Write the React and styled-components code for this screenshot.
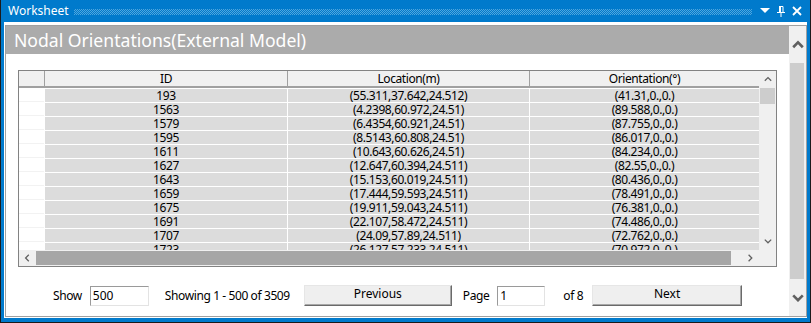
import React from "react";
import styled, { createGlobalStyle } from "styled-components";

const rows = [
  ["193", "(55.311,37.642,24.512)", "(41.31,0.,0.)"],
  ["1563", "(4.2398,60.972,24.51)", "(89.588,0.,0.)"],
  ["1579", "(6.4354,60.921,24.51)", "(87.755,0.,0.)"],
  ["1595", "(8.5143,60.808,24.51)", "(86.017,0.,0.)"],
  ["1611", "(10.643,60.626,24.51)", "(84.234,0.,0.)"],
  ["1627", "(12.647,60.394,24.511)", "(82.55,0.,0.)"],
  ["1643", "(15.153,60.019,24.511)", "(80.436,0.,0.)"],
  ["1659", "(17.444,59.593,24.511)", "(78.491,0.,0.)"],
  ["1675", "(19.911,59.043,24.511)", "(76.381,0.,0.)"],
  ["1691", "(22.107,58.472,24.511)", "(74.486,0.,0.)"],
  ["1707", "(24.09,57.89,24.511)", "(72.762,0.,0.)"],
  ["1723", "(26.127,57.233,24.511)", "(70.972,0.,0.)"],
];

// small chevron used by the scroll bars
function Chevron({dir = "up", size = 8, weight = 1.6}) {
  const paths = {
    up: "M1 6 L5 2 L9 6",
    down: "M1 2 L5 6 L9 2",
    left: "M6 1 L2 5 L6 9",
    right: "M2 1 L6 5 L2 9",
  };
  const horizontal = dir === "up" || dir === "down";
  return (
    <svg
      width={horizontal ? size : size * 0.8}
      height={horizontal ? size * 0.8 : size}
      viewBox={horizontal ? "0 0 10 8" : "0 0 8 10"}
    >
      <path d={paths[dir]} fill="none" stroke="#606060" strokeWidth={weight} />
    </svg>
  );
}

export default function App() {
  return (
    <>
      <GlobalStyle />
      <Window>
        <TitleBar>
          <TitleText>Worksheet</TitleText>
          <Dots />
          <TitleIcons>
            <svg width="10" height="6" viewBox="0 0 10 6">
              <path d="M0 0 H10 L5 5 Z" fill="#fff" />
            </svg>
            <svg width="8" height="11" viewBox="0 0 8 11">
              <path d="M2 0.5 H6 V6 M2.5 0.5 V6 M3.5 0.5 V6" fill="none" stroke="#fff" strokeWidth="1" />
              <path d="M0 6.5 H8 M4 6.5 V11" fill="none" stroke="#fff" strokeWidth="1" />
            </svg>
            <svg width="10" height="10" viewBox="0 0 10 10">
              <path d="M1 1 L9 9 M9 1 L1 9" fill="none" stroke="#fff" strokeWidth="1.8" />
            </svg>
          </TitleIcons>
        </TitleBar>
        <Body>
          <Panel>
            <Frame>
              <Content>
                <HeaderBar>Nodal Orientations(External Model)</HeaderBar>
                <GridBox>
                  <GridTop>
                    <Table>
                      <HeadRow>
                        <HeadCell />
                        <HeadCell>ID</HeadCell>
                        <HeadCell>Location(m)</HeadCell>
                        <HeadCell $last>Orientation(°)</HeadCell>
                      </HeadRow>
                      {rows.map((r) => (
                        <Row key={r[0]}>
                          <RowHead />
                          <Cell>{r[0]}</Cell>
                          <Cell>{r[1]}</Cell>
                          <Cell $last>{r[2]}</Cell>
                        </Row>
                      ))}
                    </Table>
                    <VScroll>
                      <ArrowBox $h={17}><Chevron dir="up" /></ArrowBox>
                      <VTrack>
                        <VThumb />
                      </VTrack>
                      <ArrowBox $h={17}><Chevron dir="down" /></ArrowBox>
                    </VScroll>
                  </GridTop>
                  <HScroll>
                    <ArrowBox $w={17}><Chevron dir="left" /></ArrowBox>
                    <HTrack>
                      <HThumb />
                    </HTrack>
                    <ArrowBox $w={17}><Chevron dir="right" /></ArrowBox>
                    <Corner />
                  </HScroll>
                </GridBox>
                <Pager>
                  <Label>Show</Label>
                  <Field $w={59} $gap={8} defaultValue="500" />
                  <Label $gap={16}>Showing 1 - 500 of 3509</Label>
                  <Button $w={148} $gap={14}>Previous</Button>
                  <Label $gap={11}>Page</Label>
                  <Field $w={48} $gap={8} defaultValue="1" />
                  <Label $gap={18}>of 8</Label>
                  <Button $w={150} $gap={9}>Next</Button>
                </Pager>
              </Content>
              <OuterScroll>
                <ArrowBox $h={37}><Chevron dir="up" size={12} weight={2.2} /></ArrowBox>
                <VTrack>
                  <OuterThumb />
                </VTrack>
                <ArrowBox $h={37}><Chevron dir="down" size={12} weight={2.2} /></ArrowBox>
              </OuterScroll>
            </Frame>
          </Panel>
        </Body>
      </Window>
    </>
  );
}

const GlobalStyle = createGlobalStyle`
  html, body {
    margin: 0;
    padding: 0;
    overflow: hidden;
    background: #fff;
  }
  body {
    font-family: "Noto Sans", "Open Sans", sans-serif;
  }
`;

const Window = styled.div`
  width: 811px;
  height: 323px;
  box-sizing: border-box;
  display: flex;
  flex-direction: column;
  background: #007acc;
  border: 1px solid #1b1b1b;
  border-top: none;
`;

const TitleBar = styled.div`
  height: 22px;
  flex: none;
  display: flex;
  align-items: center;
  padding: 0 8px 0 7px;
  color: #fff;
`;

const TitleText = styled.span`
  font-size: 12px;
  line-height: 22px;
`;

const Dots = styled.div`
  flex: 1;
  height: 6px;
  margin: 1px 8px 0 5px;
  background-image: repeating-conic-gradient(#4fa6de 0 25%, transparent 0 50%);
  background-size: 2px 2px;
`;

const TitleIcons = styled.div`
  display: flex;
  align-items: center;
  gap: 7px;
  svg {
    display: block;
  }
`;

const Body = styled.div`
  flex: 1;
  display: flex;
  padding: 0 3px 4px 3px;
  min-height: 0;
`;

const Panel = styled.div`
  flex: 1;
  display: flex;
  background: #fff;
  padding: 3px 0 1px 1px;
`;

const Frame = styled.div`
  flex: 1;
  display: flex;
  border: 1px solid #a0a0a0;
  min-width: 0;
`;

const Content = styled.div`
  flex: 1;
  display: flex;
  flex-direction: column;
  min-width: 0;
`;

const HeaderBar = styled.div`
  height: 28px;
  background: #ababab;
  color: #fff;
  font-size: 17.6px;
  line-height: 28px;
  padding-left: 8px;
  white-space: nowrap;
`;

const GridBox = styled.div`
  margin: 16px 0 0 12px;
  width: 759px;
  height: 197px;
  box-sizing: border-box;
  border: 1px solid #828282;
  display: flex;
  flex-direction: column;
  font-size: 12px;
  letter-spacing: -0.4px;
  color: #000;
`;

const GridTop = styled.div`
  height: 179px;
  display: flex;
  overflow: hidden;
`;

const Table = styled.div`
  flex: 1;
  overflow: hidden;
`;

const cols = "26px 243px 242px 1fr";

const HeadRow = styled.div`
  display: grid;
  grid-template-columns: ${cols};
  height: 17px;
  box-sizing: border-box;
  background: #f0f0f0;
  border-bottom: 2px solid #a0a0a0;
`;

const HeadCell = styled.div`
  text-align: center;
  line-height: 15px;
  border-right: ${(p) => (p.$last ? "none" : "1px solid #a0a0a0")};
  white-space: nowrap;
`;

const Row = styled.div`
  display: grid;
  grid-template-columns: ${cols};
  height: 14px;
  box-sizing: border-box;
  border-top: 1px solid #fff;
`;

const RowHead = styled.div`
  background: #fff;
  border-right: 1px solid #fff;
  box-shadow: inset 0 -1px #f2f2f2;
`;

const Cell = styled.div`
  background: #dcdcdc;
  text-align: center;
  line-height: 13px;
  white-space: nowrap;
  border-right: ${(p) => (p.$last ? "none" : "1px solid #fff")};
`;

const VScroll = styled.div`
  width: 17px;
  display: flex;
  flex-direction: column;
  background: #f0f0f0;
`;

const ArrowBox = styled.div`
  flex: none;
  width: ${(p) => (p.$w ? `${p.$w}px` : "auto")};
  height: ${(p) => (p.$h ? `${p.$h}px` : "auto")};
  display: flex;
  align-items: center;
  justify-content: center;
  svg {
    display: block;
  }
`;

const VTrack = styled.div`
  flex: 1;
  display: flex;
  flex-direction: column;
`;

const VThumb = styled.div`
  height: 16px;
  margin: 0 1px;
  background: #cdcdcd;
`;

const HScroll = styled.div`
  height: 16px;
  display: flex;
  background: #f0f0f0;
`;

const HTrack = styled.div`
  flex: 1;
  display: flex;
`;

const HThumb = styled.div`
  width: 695px;
  margin: 1px 0;
  background: #a6a6a6;
`;

const Corner = styled.div`
  width: 17px;
  background: #f0f0f0;
`;

const Pager = styled.div`
  display: flex;
  align-items: center;
  height: 21px;
  margin-top: 18px;
  padding-left: 47px;
  font-size: 12px;
  letter-spacing: -0.4px;
  color: #000;
`;

const Label = styled.span`
  margin-left: ${(p) => p.$gap || 0}px;
  white-space: nowrap;
`;

const Field = styled.input`
  margin-left: ${(p) => p.$gap || 0}px;
  width: ${(p) => p.$w}px;
  height: 20px;
  box-sizing: border-box;
  border: 1px solid;
  border-color: #9a9a9a #e3e3e3 #e3e3e3 #9a9a9a;
  padding: 0 2px;
  font: inherit;
  font-size: 12px;
  color: #000;
  outline: none;
`;

const Button = styled.button`
  margin-left: ${(p) => p.$gap || 0}px;
  width: ${(p) => p.$w}px;
  height: 21px;
  box-sizing: border-box;
  background: #efefef;
  border: 1px solid;
  border-color: #e6e6e6 #6a6a6a #6a6a6a #e6e6e6;
  box-shadow: inset -1px -1px #a8a8a8;
  font: inherit;
  font-size: 12px;
  line-height: 16px;
  padding: 0 0 3px;
  color: #000;
`;

const OuterScroll = styled.div`
  width: 17px;
  display: flex;
  flex-direction: column;
  background: #f0f0f0;
`;

const OuterThumb = styled.div`
  flex: 1;
  margin: 0 2px 0 1px;
  background: #cdcdcd;
`;
